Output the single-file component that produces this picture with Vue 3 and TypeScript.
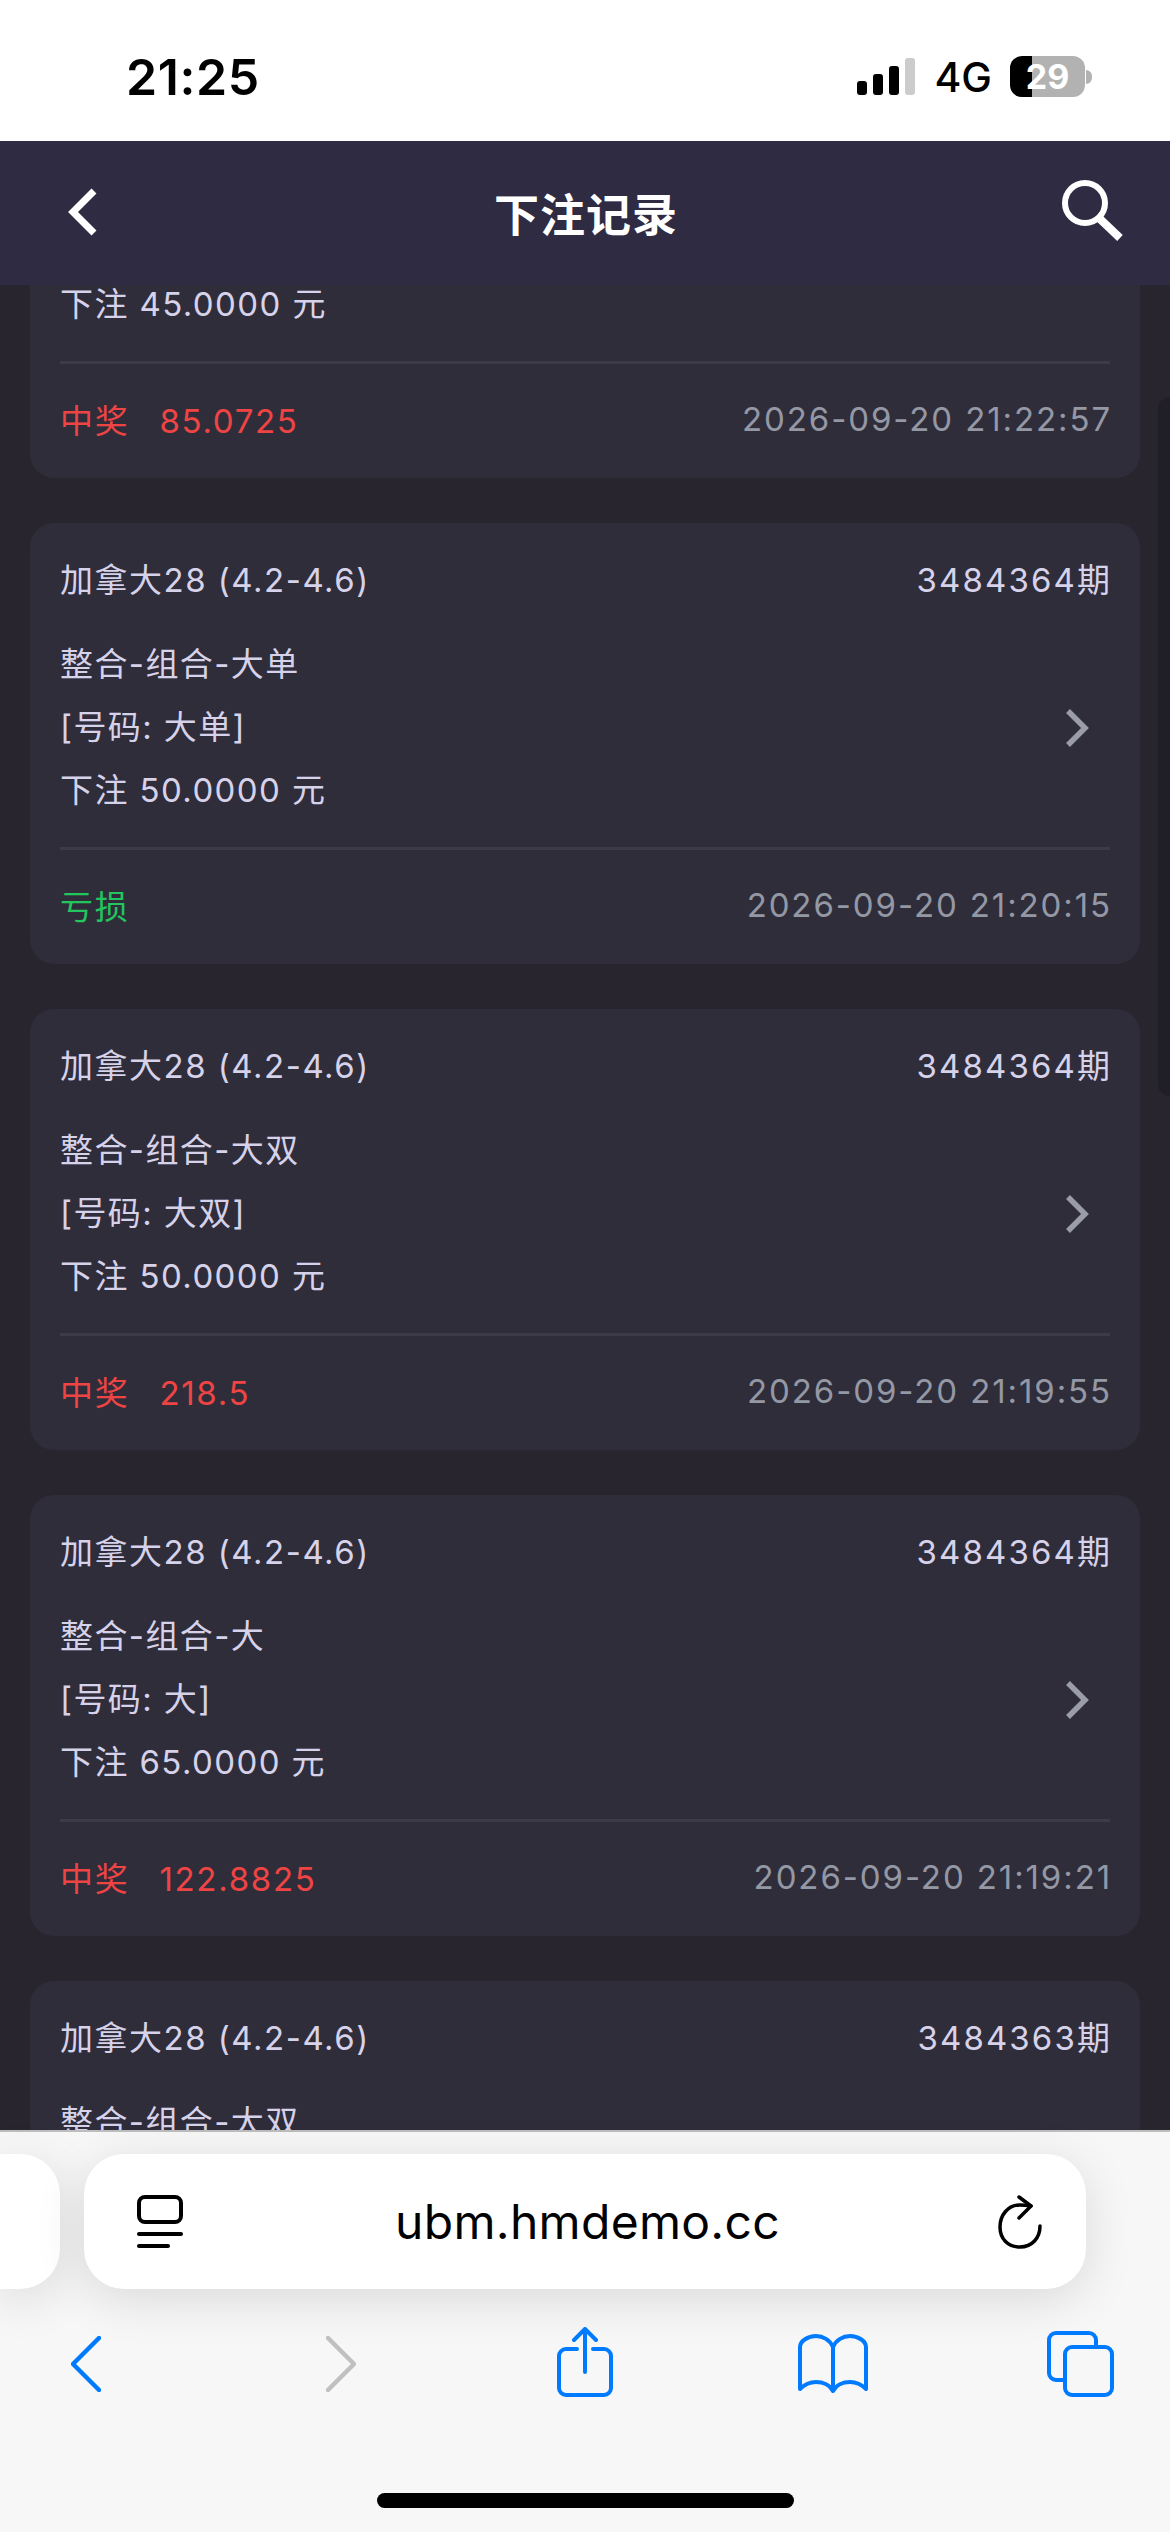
<script setup lang="ts">
interface Bet {
  game: string
  issue: string
  play: string
  code: string
  stake: string
  won: boolean
  amount?: string
  time: string
}

const bets: Bet[] = [
  { game: '加拿大28 (4.2-4.6)', issue: '3484364期', play: '整合-组合-小双', code: '小双', stake: '45.0000', won: true, amount: '85.0725', time: '2026-09-20 21:22:57' },
  { game: '加拿大28 (4.2-4.6)', issue: '3484364期', play: '整合-组合-大单', code: '大单', stake: '50.0000', won: false, time: '2026-09-20 21:20:15' },
  { game: '加拿大28 (4.2-4.6)', issue: '3484364期', play: '整合-组合-大双', code: '大双', stake: '50.0000', won: true, amount: '218.5', time: '2026-09-20 21:19:55' },
  { game: '加拿大28 (4.2-4.6)', issue: '3484364期', play: '整合-组合-大', code: '大', stake: '65.0000', won: true, amount: '122.8825', time: '2026-09-20 21:19:21' },
  { game: '加拿大28 (4.2-4.6)', issue: '3484363期', play: '整合-组合-大双', code: '大双', stake: '50.0000', won: true, amount: '218.5', time: '2026-09-20 21:18:02' },
]
</script>

<template>
  <div class="page">
    <div class="status">
      <span class="clock">21:25</span>
      <div class="status-right">
        <div class="signal">
          <i class="b1"></i><i class="b2"></i><i class="b3"></i><i class="b4"></i>
        </div>
        <span class="net">4G</span>
        <div class="battery">
          <div class="battery-body"><span>29</span></div>
          <div class="battery-nub"></div>
        </div>
      </div>
    </div>

    <header class="nav">
      <svg class="nav-back" width="29" height="48" viewBox="0 0 29 48" fill="none">
        <path d="M26 3 5 24l21 21" stroke="#fff" stroke-width="7" />
      </svg>
      <h1>下注记录</h1>
      <svg class="nav-search" width="64" height="64" viewBox="0 0 64 64" fill="none">
        <circle cx="25" cy="25" r="20" stroke="#fff" stroke-width="6" />
        <path d="M39 40 60 60" stroke="#fff" stroke-width="8" />
      </svg>
    </header>

    <main class="list">
      <div class="thumb"></div>
      <article v-for="(bet, i) in bets" :key="i" class="card">
        <div class="card-head">
          <span class="game">{{ bet.game }}</span>
          <span class="issue">{{ bet.issue }}</span>
        </div>
        <div class="card-body">
          <div class="lines">
            <div>{{ bet.play }}</div>
            <div>[号码: {{ bet.code }}]</div>
            <div>下注 {{ bet.stake }} 元</div>
          </div>
          <svg class="arrow" width="24" height="38" viewBox="0 0 24 38" fill="none">
            <path d="M3 2 20 19 3 36" stroke="#9a9da8" stroke-width="5.500" />
          </svg>
        </div>
        <div class="card-foot">
          <span v-if="bet.won" class="win">中奖<b>{{ bet.amount }}</b></span>
          <span v-else class="lose">亏损</span>
          <span class="time">{{ bet.time }}</span>
        </div>
      </article>
    </main>

    <footer class="safari">
      <div class="address">
        <div class="tab-peek"></div>
        <div class="pill">
          <svg width="46" height="54" viewBox="0 0 46 54" fill="none" stroke="#000" stroke-linecap="round">
            <rect x="2" y="2" width="42" height="25" rx="6" stroke-width="4" />
            <path d="M2 39h42" stroke-width="4" />
            <path d="M2 51h29" stroke-width="4" />
          </svg>
          <span class="url">ubm.hmdemo.cc</span>
          <svg width="44" height="54" viewBox="0 0 44 54" fill="none" stroke="#000" stroke-width="3.500" stroke-linecap="round" stroke-linejoin="round">
            <path d="M33 11C30 10.500 26 10 22 10 10 10 2 20 2 32c0 12 8 20 20 20s20-9 20-21" />
            <path d="M21 2 33 11 21 23" />
          </svg>
        </div>
      </div>
      <div class="tools">
        <svg class="t-back" width="30" height="56" viewBox="0 0 30 56" fill="none">
          <path d="M28 2 2 28l26 26" stroke="#007aff" stroke-width="4.500" stroke-linecap="round" stroke-linejoin="round" />
        </svg>
        <svg class="t-fwd" width="30" height="56" viewBox="0 0 30 56" fill="none">
          <path d="M2 2 28 28 2 54" stroke="#c0c0c0" stroke-width="4.500" stroke-linecap="round" stroke-linejoin="round" />
        </svg>
        <svg class="t-share" width="56" height="70" viewBox="0 0 56 70" fill="none" stroke="#007aff" stroke-width="4" stroke-linecap="round" stroke-linejoin="round">
          <path d="M20 22H9a7 7 0 0 0-7 7v32a7 7 0 0 0 7 7h38a7 7 0 0 0 7-7V29a7 7 0 0 0-7-7H36" />
          <path d="M28 45V2M17 13 28 2l11 11" />
        </svg>
        <svg class="t-book" width="70" height="60" viewBox="0 0 70 60" fill="none" stroke="#007aff" stroke-width="4" stroke-linejoin="round">
          <path d="M35 13C32 6 25 2 18 2 10 2 2 7 2 13v42c5-5 10-7 16-7 7 0 14 3 17 9 3-6 10-9 17-9 6 0 11 2 16 7V13c0-6-8-11-16-11-7 0-14 4-17 11Z" />
          <path d="M35 13v44" />
        </svg>
        <svg class="t-tabs" width="67" height="66" viewBox="0 0 67 66" fill="none" stroke="#007aff" stroke-width="4">
          <path d="M16 49H9a7 7 0 0 1-7-7V9a7 7 0 0 1 7-7h33a7 7 0 0 1 7 7v7" />
          <rect x="18" y="16" width="47" height="48" rx="7" />
        </svg>
      </div>
      <div class="home"></div>
    </footer>
  </div>
</template>

<style scoped>
.page {
  width: 1170px;
  height: 2532px;
  display: flex;
  flex-direction: column;
  overflow: hidden;
  font-family: Inter, "Noto Sans CJK SC", sans-serif;
  background: #28252f;
}

.status {
  height: 141px;
  flex: none;
  background: #fff;
  display: flex;
  align-items: center;
  justify-content: space-between;
  padding: 12px 78px 0 126px;
  box-sizing: border-box;
}

.clock {
  font-size: 50px;
  font-weight: 600;
  letter-spacing: 0.6px;
  color: #000;
}

.status-right {
  display: flex;
  align-items: center;
}

.signal {
  display: flex;
  align-items: flex-end;
  gap: 6px;
  height: 37px;
}

.signal i {
  width: 10px;
  border-radius: 3px;
  background: #000;
}

.b1 { height: 14px; }
.b2 { height: 21px; }
.b3 { height: 29px; }
.signal .b4 { height: 37px; background: #ccc; }

.net {
  font-size: 41px;
  font-weight: 500;
  color: #000;
  margin-left: 19px;
  margin-right: 18px;
}

.battery {
  display: flex;
  align-items: center;
  gap: 1px;
}

.battery-body {
  width: 75px;
  height: 41px;
  border-radius: 12px;
  background: linear-gradient(90deg, #000 29%, #b2b2b2 29%);
  display: flex;
  align-items: center;
  justify-content: center;
  color: #fff;
  font-size: 34px;
  font-weight: 700;
}

.battery-nub {
  width: 6px;
  height: 14px;
  border-radius: 0 7px 7px 0;
  background: #b2b2b2;
}

.nav {
  height: 144px;
  flex: none;
  background: #2e2b43;
  display: flex;
  align-items: center;
  justify-content: space-between;
  padding: 0 46px 0 68px;
  box-sizing: border-box;
  z-index: 1;
}

.nav h1 {
  margin: -2px 0 0 15px;
  font-size: 45px;
  font-weight: 700;
  letter-spacing: 1px;
  color: #fff;
}

.nav-back {
  margin-top: -2px;
}

.nav-search {
  margin-top: -6px;
}

.list {
  flex: 1;
  min-height: 0;
  position: relative;
  overflow: hidden;
  padding: 0 30px;
}

.thumb {
  position: absolute;
  right: 0;
  top: 112px;
  width: 12px;
  height: 699px;
  border-radius: 12px 0 0 12px;
  background: #201e28;
}

.card {
  height: 441px;
  margin-bottom: 45px;
  border-radius: 24px;
  background: #2f2d3a;
  padding: 0 30px;
  box-sizing: border-box;
  color: #d6d2ea;
  font-size: 33px;
  letter-spacing: 1.7px;
  display: flex;
  flex-direction: column;
}

.card:first-of-type {
  margin-top: -248px;
}

.card-head {
  display: flex;
  justify-content: space-between;
  padding-top: 30px;
  line-height: 54px;
}

.game {
  letter-spacing: 1.5px;
}

.issue {
  letter-spacing: 2.1px;
  margin-right: -2px;
}

.card-body {
  display: flex;
  align-items: center;
  justify-content: space-between;
  margin-top: 26px;
  padding-bottom: 25px;
  padding-right: 21px;
  border-bottom: 3px solid #3d3a4a;
}

.lines {
  line-height: 63px;
  letter-spacing: 1.4px;
}

.card-foot {
  flex: 1;
  display: flex;
  align-items: center;
  justify-content: space-between;
  padding-bottom: 5px;
}

.win {
  color: #ef4444;
}

.win b {
  font-weight: 400;
  margin-left: 30px;
}

.lose {
  color: #22c55e;
}

.time {
  color: #9498a5;
  letter-spacing: 1.9px;
  margin-right: -2px;
}

.safari {
  height: 402px;
  flex: none;
  box-sizing: border-box;
  background: #f7f7f7;
  border-top: 2px solid #bdbdbd;
  display: flex;
  flex-direction: column;
  z-index: 1;
}

.address {
  display: flex;
  gap: 24px;
  margin-top: 22px;
  height: 135px;
}

.tab-peek {
  width: 60px;
  border-radius: 0 40px 40px 0;
  background: #fff;
  box-shadow: 0 10px 50px rgba(0, 0, 0, 0.12);
}

.pill {
  width: 1002px;
  border-radius: 40px;
  background: #fff;
  box-shadow: 0 10px 50px rgba(0, 0, 0, 0.12);
  display: flex;
  align-items: center;
  justify-content: space-between;
  padding: 0 44px 0 53px;
  box-sizing: border-box;
}

.url {
  font-size: 48px;
  letter-spacing: 0.3px;
  margin-left: -6px;
  color: #000;
}

.tools {
  display: flex;
  align-items: center;
  height: 70px;
  margin-top: 38px;
}

.t-back { margin: 4px 0 0 71px; }
.t-fwd { margin: 4px 0 0 225px; }
.t-share { margin-left: 201px; }
.t-book { margin: 3px 0 0 185px; }
.t-tabs { margin: 4px 0 0 179px; }

.home {
  width: 417px;
  height: 15px;
  border-radius: 8px;
  background: #000;
  margin: 96px auto 0;
}
</style>
